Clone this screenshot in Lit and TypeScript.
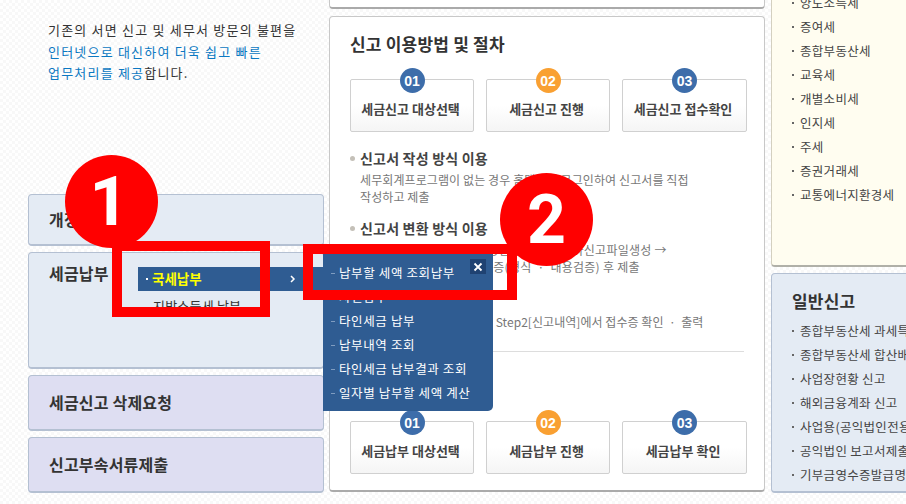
import { LitElement, html, css } from "lit";
import { customElement } from "lit/decorators.js";

@customElement("app-root")
export class AppRoot extends LitElement {
  static styles = css`
    :host { display: block; width: 906px; height: 504px; overflow: hidden; position: relative;
      font-family: "Noto Sans CJK KR", "Noto Sans", sans-serif; color: #333;
      background: repeating-conic-gradient(#f8f8f8 0 25%, #fff 0 50%) 0 0 / 6px 6px; }
    .page { display: grid; grid-template-columns: 296px 436px 200px; column-gap: 5px; padding-left: 28px; height: 504px; box-sizing: border-box; }
    .left { display: flex; flex-direction: column; gap: 6px; padding-top: 19px; }
    .intro { height: 169px; margin-left: 20px; font-size: 13px; line-height: 21.5px; color: #333; letter-spacing: 1.2px; white-space: nowrap; }
    .intro b { font-weight: 400; color: #0b78c2; }
    .card { box-sizing: border-box; border: 1px solid #b4c0d2; border-bottom-width: 2px; border-radius: 4px; padding: 0 20px 2px; font-size: 16px; letter-spacing: 0.2px; font-weight: 700; color: #333; display: flex; align-items: center; white-space: nowrap; }
    .blue { background: #e4ebf4; }
    .lav { background: #dedef2; }
    .c1 { height: 52px; }
    .c2 { height: 117px; align-items: flex-start; padding-top: 8px; position: relative; }
    .c3 { height: 56px; }
    .mid { display: flex; flex-direction: column; gap: 7px; margin-top: -60px; }
    .panel { background: #fff; border: 1px solid #c8c8c8; border-bottom: 2px solid #aaa; border-radius: 4px; box-sizing: border-box; }
    .p1 { height: 69px; }
    .p2 { height: 476px; padding: 16px 20px 0 20px; }
    h2 { margin: 0; font-size: 17px; line-height: 22px; font-weight: 700; color: #333; white-space: nowrap; letter-spacing: 0.2px; }
    .steps { display: grid; grid-template-columns: 124px 124px 125px; column-gap: 12px; }
    .s1 { margin-top: 24px; }
    .s2 { margin-top: 28px; }
    .step { position: relative; box-sizing: border-box; height: 53px; border: 1px solid #d0d0d0; border-radius: 2px; background: linear-gradient(#fff 50%, #f5f5f5); font-size: 13px; font-weight: 700; color: #444; display: flex; align-items: center; justify-content: center; padding: 6px 3px 0 0; white-space: nowrap; }
    .num { position: absolute; left: 50%; top: -12px; margin-left: -12.5px; width: 25px; height: 25px; border-radius: 50%; font-size: 14px; font-weight: 700; color: #fff; display: flex; align-items: center; justify-content: center; font-family: "Liberation Sans", sans-serif; background: #3d6daa; }
    .num.o { background: #f9a032; }
    .m { margin-left: 10px; white-space: nowrap; position: relative; }
    .m h3 { margin: 0; font-size: 14px; line-height: 20px; font-weight: 700; color: #444; position: relative; letter-spacing: 0.2px; }
    .m h3::before { content: ""; position: absolute; left: -10px; top: 8px; width: 5px; height: 5px; border-radius: 50%; background: #c4c0b8; }
    .m p { margin: 4px 0 0; font-size: 12px; line-height: 16.5px; color: #777; letter-spacing: 0.1px; }
    .m p.wide { letter-spacing: 0.27px; }
    .m p.tight { letter-spacing: 0.05px; }
    .m1 { margin-top: 16px; }
    .m2 { margin-top: 13px; }
    .m3 { margin-top: 15px; }
    .rule { border: 0; border-top: 1px solid #ddd; margin: 20.5px 0 0; }
    .sub { margin-top: 19px; font-size: 15px; line-height: 22px; font-weight: 700; color: #333; }
    .right { display: flex; flex-direction: column; gap: 6px; margin-top: -209px; margin-left: 1px; }
    .rc { box-sizing: border-box; border: 1px solid #ccc; border-bottom: 2px solid #aaa; border-radius: 4px; width: 220px; padding-left: 20px; }
    .yellow { background: #fffdf0; height: 476px; padding-top: 7px; border-color: #d4d0c0 #d4d0c0 #b0b0a8; }
    .gen { background: #e4ebf4; height: 220px; padding-top: 16px; border-color: #b4c0d2; }
    .gen h2 { margin-bottom: 7px; }
    ul { list-style: none; margin: 0; padding: 0; }
    li { height: 24px; line-height: 24px; font-size: 12.5px; color: #444; position: relative; padding-left: 8px; white-space: nowrap; letter-spacing: 0.3px; }
    li::before { content: ""; position: absolute; left: 0; top: 11px; width: 2px; height: 2px; background: #666; }
    .sel { position: absolute; left: 138px; top: 267px; width: 185px; height: 24px; background: #2f5c92; display: flex; align-items: center; color: #ff0; font-size: 13.5px; font-weight: 700; white-space: nowrap; box-sizing: border-box; padding: 0 0 3px 14px; }
    .sel::before { content: ""; position: absolute; left: 8px; top: 11px; width: 2px; height: 2px; background: #fff; }
    .sel svg { position: absolute; left: 152px; top: 8px; }
    .local { position: absolute; left: 153px; top: 296px; font-size: 13px; color: #333; white-space: nowrap; letter-spacing: 0.2px; }
    .menu { position: absolute; left: 323px; top: 253px; width: 170px; height: 158px; background: #2f5c92; border-radius: 0 0 5px 0; box-sizing: border-box; padding-top: 8px; }
    .menu div.i { height: 24px; line-height: 24px; padding-left: 16px; font-size: 12.5px; color: #fff; white-space: nowrap; position: relative; letter-spacing: 0.62px; }
    .menu div.i::before { content: ""; position: absolute; left: 8px; top: 12px; width: 4px; height: 1px; background: #7f9cc0; }
    .close { position: absolute; left: 147px; top: 6px; width: 16px; height: 15px; background: #1f4272; display: flex; align-items: center; justify-content: center; }
    .box { position: absolute; box-sizing: border-box; border: 10px solid #f00; }
    .b1 { left: 112px; top: 241px; width: 158px; height: 76px; }
    .b2 { left: 303px; top: 244px; width: 214px; height: 56px; }
    .circle { position: absolute; box-sizing: border-box; width: 93px; height: 93px; border-radius: 50%; background: #f00; color: #fff; font-family: Roboto, sans-serif; font-weight: 700; font-size: 68px; display: flex; align-items: center; justify-content: center; line-height: 1; }
    .n1 { left: 65px; top: 155px; padding-right: 5px; }
    .n2 { left: 500px; top: 173px; }
  `;

  render() {
    const step = (n: string, t: string, o = false) => html`<div class="step"><span class="num ${o ? "o" : ""}">${n}</span>${t}</div>`;
    return html`
      <div class="page">
        <div class="left">
          <div class="intro">기존의 서면 신고 및 세무서 방문의 불편을<br /><b>인터넷으로 대신하여 더욱 쉽고 빠른</b><br /><b>업무처리를 제공</b>합니다.</div>
          <div class="card blue c1">개정세법 안내</div>
          <div class="card blue c2">세금납부</div>
          <div class="card lav c3">세금신고 삭제요청</div>
          <div class="card lav c3">신고부속서류제출</div>
        </div>
        <div class="mid">
          <div class="panel p1"></div>
          <div class="panel p2">
            <h2>신고 이용방법 및 절차</h2>
            <div class="steps s1">
              ${step("01", "세금신고 대상선택")}${step("02", "세금신고 진행", true)}${step("03", "세금신고 접수확인")}
            </div>
            <div class="m m1"><h3>신고서 작성 방식 이용</h3><p>세무회계프로그램이 없는 경우 홈택스에 로그인하여 신고서를 직접<br />작성하고 제출</p></div>
            <div class="m m2"><h3>신고서 변환 방식 이용</h3><p class="wide">세무회계프로그램에서 작성한 신고서로 전자신고파일생성 →<br />변환파일 업로드 및 오류검증(형식&nbsp; · &nbsp;내용검증) 후 제출</p></div>
            <div class="m m3"><h3>신고서 접수증 확인</h3><p class="tight">신고서 제출 후 결과 확인은 Step2[신고내역]에서 접수증 확인&nbsp; · &nbsp;출력</p></div>
            <hr class="rule" />
            <div class="sub">납부 이용방법 및 절차</div>
            <div class="steps s2">
              ${step("01", "세금납부 대상선택")}${step("02", "세금납부 진행", true)}${step("03", "세금납부 확인")}
            </div>
          </div>
        </div>
        <div class="right">
          <div class="rc yellow"><ul>
            ${["법인세","부가가치세","종합소득세","원천세","근로소득세","퇴직소득세","상속세","증권거래세","양도소득세","증여세","종합부동산세","교육세","개별소비세","인지세","주세","증권거래세","교통에너지환경세"].map((t) => html`<li>${t}</li>`)}
          </ul></div>
          <div class="rc gen">
            <h2>일반신고</h2>
            <ul>
              ${["종합부동산세 과세특례 신고","종합부동산세 합산배제 신고","사업장현황 신고","해외금융계좌 신고","사업용(공익법인전용)계좌 신고","공익법인 보고서제출","기부금영수증발급명세서"].map((t) => html`<li>${t}</li>`)}
            </ul>
          </div>
        </div>
      </div>
      <div class="local">지방소득세 납부</div>
      <div class="sel">국세납부<svg width="6" height="8" viewBox="0 0 6 8"><path d="M1 1l3 3-3 3" fill="none" stroke="#fff" stroke-width="1.5"/></svg></div>
      <div class="menu">
        <div class="close"><svg width="10" height="10" viewBox="0 0 10 10"><path d="M1.5 1.5l7 7M8.5 1.5l-7 7" stroke="#fff" stroke-width="1.8"/></svg></div>
        ${["납부할 세액 조회납부","자진납부","타인세금 납부","납부내역 조회","타인세금 납부결과 조회","일자별 납부할 세액 계산"].map((t) => html`<div class="i">${t}</div>`)}
      </div>
      <div class="circle n1">1</div>
      <div class="circle n2">2</div>
      <div class="box b1"></div>
      <div class="box b2"></div>
    `;
  }
}
